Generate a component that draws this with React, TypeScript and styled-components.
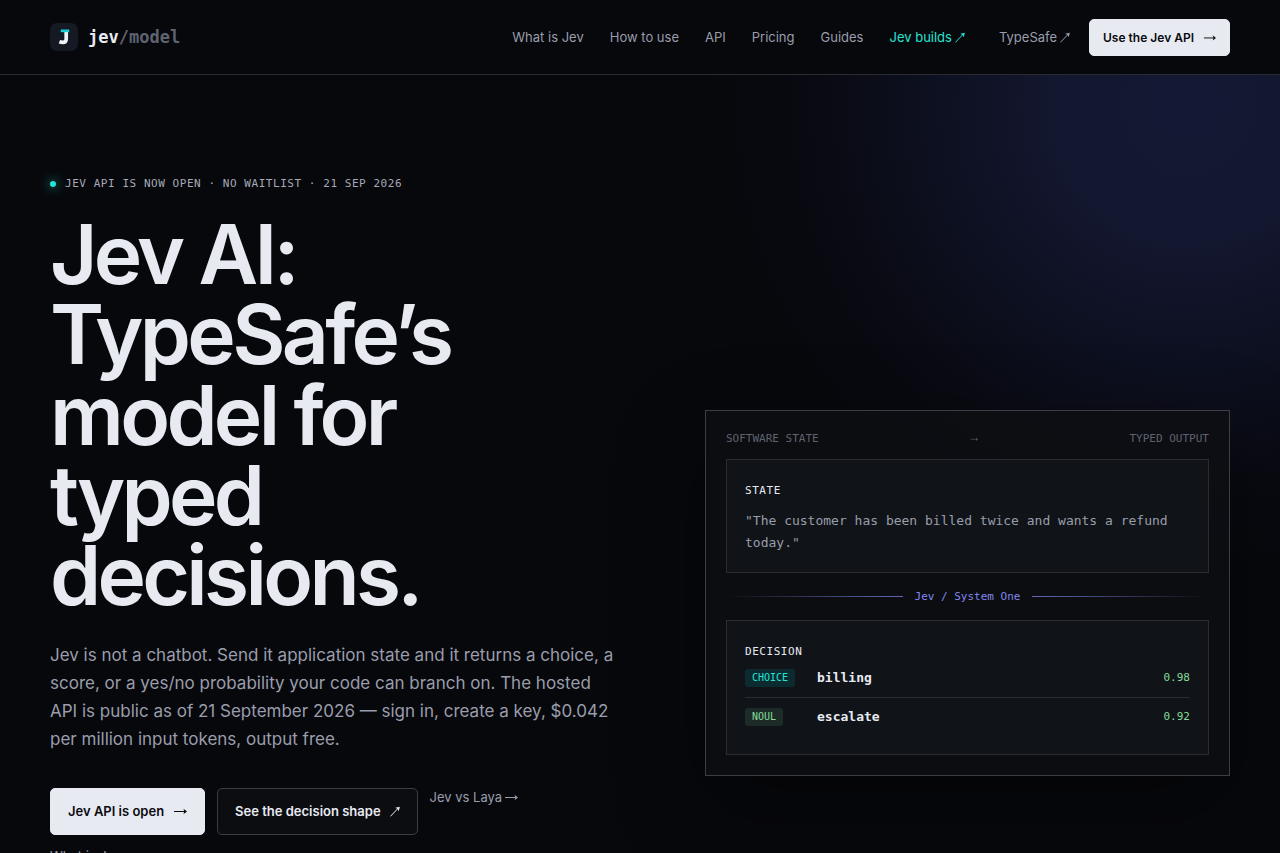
import React from "react";
import styled, { createGlobalStyle, css } from "styled-components";

const sans = `Inter, "Liberation Sans", sans-serif`;
const mono = `"DejaVu Sans Mono", "Liberation Mono", monospace`;

const c = {
  bg: "#07080c",
  line: "#2a2c32",
  lineStrong: "#3c3e45",
  ink: "#e8eaf2",
  soft: "#9a9dab",
  dim: "#5f6270",
  cyan: "#24e5d4",
  indigo: "#8087ee",
  green: "#86dc9a",
};

const GlobalStyle = createGlobalStyle`
  *, *::before, *::after { box-sizing: border-box; }
  body {
    margin: 0;
    background: ${c.bg};
    color: ${c.ink};
    font-family: ${sans};
    -webkit-font-smoothing: antialiased;
  }
  h1, p { margin: 0; }
  a { color: inherit; text-decoration: none; }
`;

const Header = styled.header`
  display: flex;
  align-items: center;
  justify-content: space-between;
  height: 75px;
  padding: 0 50px;
  border-bottom: 1px solid ${c.line};
  background: ${c.bg};
`;

const Brand = styled.a`
  display: flex;
  align-items: center;
  gap: 10px;
  font: 700 17px/24px ${mono};
`;

const BrandMuted = styled.span`
  color: ${c.dim};
`;

const HeaderSide = styled.div`
  display: flex;
  align-items: center;
  gap: 19px;
`;

const Nav = styled.nav`
  display: flex;
  align-items: center;
  gap: 26px;
`;

const NavLink = styled.a<{ $accent?: boolean }>`
  display: inline-flex;
  align-items: center;
  gap: 3px;
  color: ${(p) => (p.$accent ? c.cyan : c.soft)};
  font-size: 13px;
  line-height: 20px;
  white-space: nowrap;
`;

const External = styled.div`
  display: flex;
  padding-left: 8px;
`;

const Button = styled.button<{ $outline?: boolean; $small?: boolean }>`
  display: inline-flex;
  align-items: center;
  gap: 9px;
  border: 1px solid ${c.ink};
  border-radius: 5px;
  background: ${c.ink};
  color: #0a0b10;
  font: 600 13px/19px ${sans};
  padding: 13px 17px;
  white-space: nowrap;
  cursor: pointer;
  ${(p) =>
    p.$small &&
    css`
      font-size: 12px;
      padding: 8px 13px;
    `}
  ${(p) =>
    p.$outline &&
    css`
      border-color: ${c.lineStrong};
      background: #0c0d11;
      color: ${c.ink};
    `}
`;

const Hero = styled.main`
  display: grid;
  grid-template-columns: minmax(0, 23fr) minmax(0, 21fr);
  column-gap: 80px;
  align-items: start;
  min-height: calc(100vh - 75px);
  padding: 100px 50px 0;
  background: radial-gradient(
    circle at calc(100% - 90px) 30px,
    #141834 0,
    #13172f 140px,
    #0d1020 260px,
    #090a12 370px,
    ${c.bg} 480px
  );
`;

const Eyebrow = styled.p`
  display: flex;
  align-items: center;
  gap: 9px;
  margin-bottom: 22px;
  color: #a6a9b6;
  font: 400 11px/18px ${mono};
  letter-spacing: 0.05em;
`;

const Dot = styled.span`
  width: 6px;
  height: 6px;
  border-radius: 50%;
  background: ${c.cyan};
  box-shadow: 0 0 12px ${c.cyan};
`;

const Title = styled.h1`
  max-width: 540px;
  font-size: 82px;
  line-height: 0.98;
  font-weight: 600;
  letter-spacing: -0.045em;
`;

const Lead = styled.p`
  max-width: 570px;
  margin-top: 24px;
  color: ${c.soft};
  font-size: 17px;
  line-height: 28px;
`;

const Actions = styled.div`
  display: flex;
  flex-wrap: wrap;
  align-items: flex-start;
  gap: 12px;
  margin-top: 35px;
`;

const TextLink = styled.a`
  display: inline-flex;
  align-items: center;
  gap: 2px;
  color: ${c.soft};
  font-size: 13px;
  line-height: 18px;
`;

const LinkBreak = styled.div`
  flex-basis: 100%;
  display: flex;
`;

const Panel = styled.section`
  margin-top: 235px;
  padding: 20px;
  border: 1px solid ${c.lineStrong};
  background: rgba(14, 15, 19, 0.8);
  box-shadow: 0 30px 80px rgba(0, 0, 0, 0.4);
  font-family: ${mono};
`;

const PanelHead = styled.header`
  display: flex;
  justify-content: space-between;
  align-items: center;
  margin-bottom: 12px;
  color: ${c.dim};
  font-size: 11px;
  line-height: 16px;
`;

const Box = styled.div`
  padding: 18px;
  border: 1px solid ${c.line};
  background: rgba(18, 22, 26, 0.8);
`;

const BoxLabel = styled.p`
  font-size: 11px;
  line-height: 26px;
  letter-spacing: 0.05em;
`;

const Quote = styled.p`
  margin-top: 6px;
  color: ${c.soft};
  font-size: 13px;
  line-height: 22px;
`;

const Connector = styled.div`
  display: flex;
  align-items: center;
  gap: 12px;
  height: 47px;
  color: ${c.indigo};
  font-size: 11px;
`;

const Rule = styled.span<{ $to: "left" | "right" }>`
  flex: 1;
  height: 1px;
  background: linear-gradient(to ${(p) => p.$to}, #6168b4, transparent);
`;

const Row = styled.div`
  display: grid;
  grid-template-columns: 60px 1fr auto;
  column-gap: 12px;
  align-items: center;
  padding: 10px 0;
  & + & {
    border-top: 1px solid ${c.line};
  }
  ${BoxLabel} + & {
    padding-top: 4px;
  }
`;

const Tag = styled.span<{ $green?: boolean }>`
  justify-self: start;
  padding: 0 7px;
  border-radius: 3px;
  background: ${(p) => (p.$green ? "#1d2b28" : "#0b2b30")};
  color: ${(p) => (p.$green ? c.green : c.cyan)};
  font-size: 10px;
  line-height: 18px;
`;

const Name = styled.strong`
  font-size: 13px;
  line-height: 18px;
`;

const Score = styled.span`
  color: ${c.green};
  font-size: 11px;
  line-height: 18px;
`;

const Logo = () => (
  <svg width="28" height="28" viewBox="0 0 28 28" aria-hidden="true">
    <rect width="28" height="28" rx="7" fill="#141923" />
    <path d="M16.2 8V16Q16.2 19.4 12.8 19.4Q11 19.4 9.4 18.8" fill="none" stroke="#f1f3f8" strokeWidth="3.7" />
    <path d="M10.8 6.5H19.2V9.2H10.8Z" fill="#1ccfd4" />
  </svg>
);

const ArrowRight = ({ size = 14 }: { size?: number }) => (
  <svg width={size} height={size} viewBox="0 0 14 14" aria-hidden="true">
    <path d="M1 7.5H12.5" stroke="currentColor" fill="none" />
    <path d="M10.4 4.7L14 7.5L10.4 10.3L11.4 7.5Z" fill="currentColor" />
  </svg>
);

const ArrowUpRight = () => (
  <svg width="10" height="11" viewBox="0 0 10 11" aria-hidden="true">
    <path d="M0.4 10.4L8 2.4" stroke="currentColor" fill="none" />
    <path d="M9.8 0.8L8.8 5.2L7.6 2.9L5.2 1.8Z" fill="currentColor" />
  </svg>
);

const links = ["What is Jev", "How to use", "API", "Pricing", "Guides"];

const decisions = [
  { kind: "CHOICE", name: "billing", score: "0.98", green: false },
  { kind: "NOUL", name: "escalate", score: "0.92", green: true },
];

export default function App() {
  return (
    <>
      <GlobalStyle />
      <Header>
        <Brand href="#">
          <Logo />
          <span>
            jev<BrandMuted>/model</BrandMuted>
          </span>
        </Brand>
        <HeaderSide>
          <Nav>
            {links.map((label) => (
              <NavLink key={label} href="#">
                {label}
              </NavLink>
            ))}
            <NavLink href="#" $accent>
              Jev builds <ArrowUpRight />
            </NavLink>
            <External>
              <NavLink href="#">
                TypeSafe <ArrowUpRight />
              </NavLink>
            </External>
          </Nav>
          <Button $small>
            Use the Jev API <ArrowRight size={13} />
          </Button>
        </HeaderSide>
      </Header>
      <Hero>
        <div>
          <Eyebrow>
            <Dot />
            JEV API IS NOW OPEN · NO WAITLIST · 21 SEP 2026
          </Eyebrow>
          <Title>Jev AI: TypeSafe’s model for typed decisions.</Title>
          <Lead>
            Jev is not a chatbot. Send it application state and it returns a choice, a score, or a
            yes/no probability your code can branch on. The hosted API is public as of 21 September
            2026 — sign in, create a key, $0.042 per million input tokens, output free.
          </Lead>
          <Actions>
            <Button>
              Jev API is open <ArrowRight />
            </Button>
            <Button $outline>
              See the decision shape <ArrowUpRight />
            </Button>
            <TextLink href="#">
              Jev vs Laya <ArrowRight />
            </TextLink>
            <LinkBreak>
              <TextLink href="#">What is Jev</TextLink>
            </LinkBreak>
          </Actions>
        </div>
        <Panel>
          <PanelHead>
            <span>SOFTWARE STATE</span>
            <ArrowRight size={8} />
            <span>TYPED OUTPUT</span>
          </PanelHead>
          <Box>
            <BoxLabel>STATE</BoxLabel>
            <Quote>"The customer has been billed twice and wants a refund today."</Quote>
          </Box>
          <Connector>
            <Rule $to="left" />
            Jev / System One
            <Rule $to="right" />
          </Connector>
          <Box>
            <BoxLabel>DECISION</BoxLabel>
            {decisions.map((d) => (
              <Row key={d.kind}>
                <Tag $green={d.green}>{d.kind}</Tag>
                <Name>{d.name}</Name>
                <Score>{d.score}</Score>
              </Row>
            ))}
          </Box>
        </Panel>
      </Hero>
    </>
  );
}
